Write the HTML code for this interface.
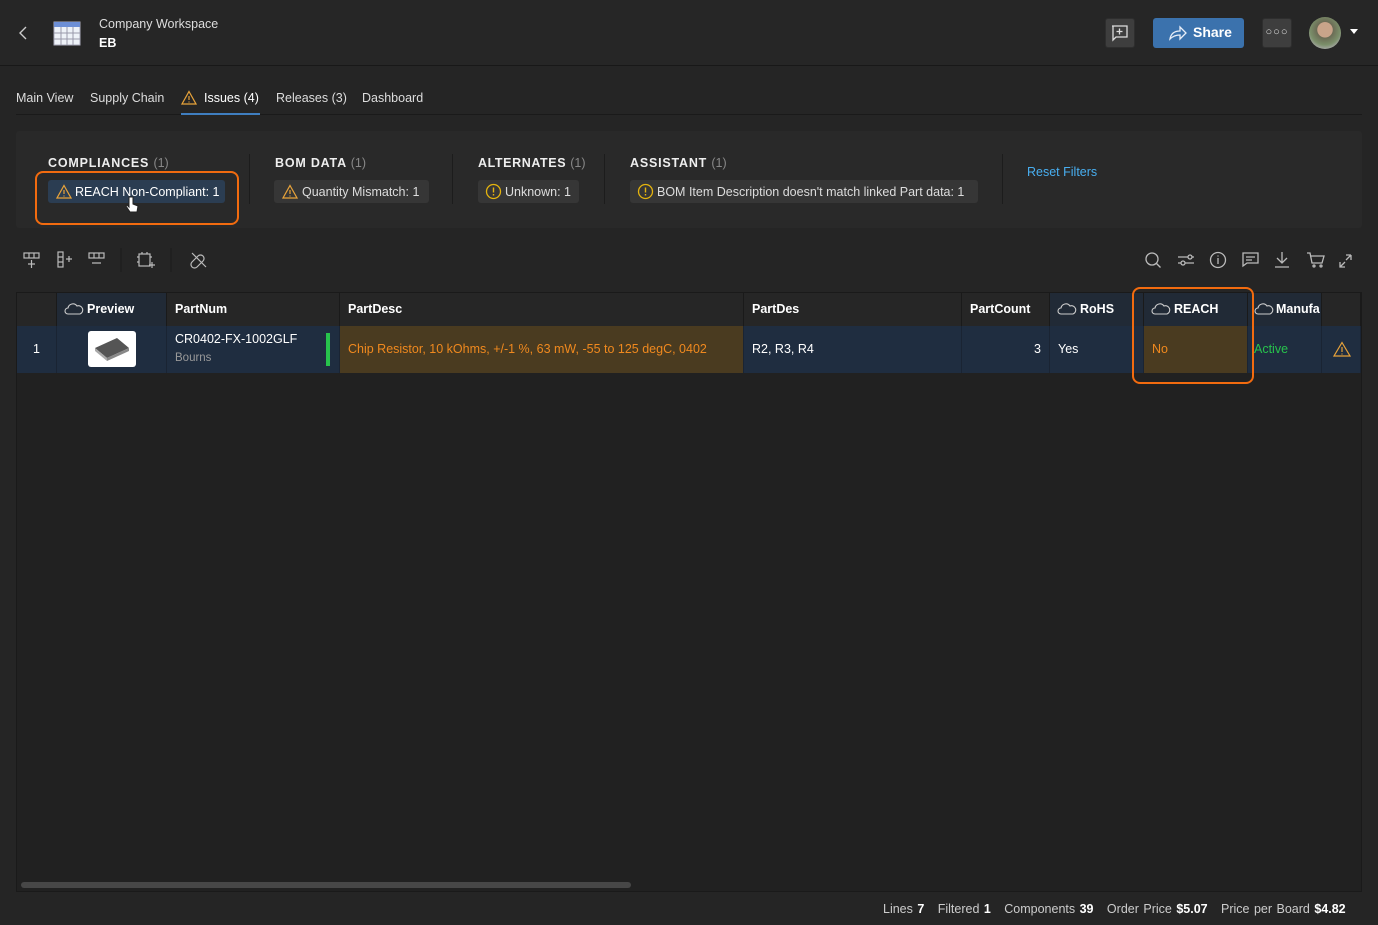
<!DOCTYPE html>
<html><head><style>
*{box-sizing:border-box;margin:0;padding:0}
body{width:1378px;height:925px;background:#252525;font-family:"Liberation Sans",sans-serif;color:#ddd;position:relative;overflow:hidden;font-size:13px}
.a{position:absolute}
.hdr{left:0;top:0;width:1378px;height:66px;border-bottom:1px solid #181818;background:#262626}
.btn{background:#3e3e3e;border:1px solid #2e2e2e;border-radius:3px}
.tab{top:91px;font-size:12.5px;color:#ddd}
.chip{height:23px;border-radius:3px;background:#363636;font-size:12.5px;color:#ddd;line-height:24px;padding:0 8px 0 8px;white-space:nowrap}
.sec{font-size:12.5px;font-weight:bold;letter-spacing:.8px;color:#eee;top:156px}
.sec span{font-weight:normal;color:#888;letter-spacing:0}
.vs{width:1px;background:#1c1c1c;top:154px;height:50px}
.th{top:293px;height:33px;background:#262626;border-right:1px solid #1a1a1a;font-weight:bold;font-size:12.5px;color:#fff;line-height:32px;padding-left:8px}
.td{top:326px;height:47px;background:#1f2d40;border-right:1px solid #1a2433;font-size:12.5px;line-height:47px;padding-left:8px;color:#fff}
</style></head><body>
<div class="a hdr"></div>
<svg class="a" style="left:18px;top:26px" width="12" height="14"><path d="M8 1L2 7l6 6" stroke="#ccc" fill="none" stroke-width="1.4"/></svg>
<svg class="a" style="left:53px;top:21px" width="28" height="25"><rect x="1" y="1" width="26" height="23" fill="#eef2f8" stroke="#aab"/><rect x="1" y="1" width="26" height="5" fill="#6d8fd6"/><path d="M1 12h26M1 18h26M8 6v18M14 6v18M20 6v18" stroke="#99a" stroke-width="1"/></svg>
<div class="a" style="left:99px;top:17px;font-size:12.5px;color:#ddd">Company Workspace</div>
<div class="a" style="left:99px;top:36px;font-size:12.5px;font-weight:bold;color:#fff">EB</div>
<div class="a btn" style="left:1105px;top:18px;width:30px;height:30px"></div>
<svg class="a" style="left:1110px;top:24px" width="20" height="18"><path d="M2 2h15v11H6l-3 3V2z M9.5 4.5v6M6.5 7.5h6" stroke="#ddd" fill="none" stroke-width="1.3"/></svg>
<div class="a" style="left:1153px;top:18px;width:91px;height:30px;background:#3b72ad;border-radius:3px"></div>
<svg class="a" style="left:1168px;top:24px" width="20" height="18"><path d="M2 15c1-6 5-8 10-8V3l6 6-6 6v-4c-4 0-7 1-10 4z" stroke="#e8eef8" fill="none" stroke-width="1.3"/></svg>
<div class="a" style="left:1193px;top:24px;font-size:14px;font-weight:bold;color:#fff">Share</div>
<div class="a btn" style="left:1262px;top:18px;width:30px;height:30px;color:#ddd;text-align:center;line-height:26px;font-size:11px;letter-spacing:1px">○○○</div>
<div class="a" style="left:1309px;top:17px;width:32px;height:32px;border-radius:50%;background:radial-gradient(circle at 50% 40%,#c9a48a 0 30%,#6b6b55 32%,#7b8f6a 60%,#aaa 80%)"></div>
<div class="a" style="left:1350px;top:29px;width:0;height:0;border-left:4px solid transparent;border-right:4px solid transparent;border-top:5px solid #fff"></div>

<div class="a tab" style="left:16px">Main View</div>
<div class="a tab" style="left:90px">Supply Chain</div>
<svg class="a" style="left:181px;top:90px" width="16" height="15"><path d="M8 1.5L15 14H1z" stroke="#e8a33a" fill="none" stroke-width="1.2"/><path d="M8 6v4M8 11.5v1" stroke="#e8a33a" stroke-width="1.2"/></svg>
<div class="a tab" style="left:204px;color:#fff">Issues (4)</div>
<div class="a tab" style="left:276px">Releases (3)</div>
<div class="a tab" style="left:362px">Dashboard</div>
<div class="a" style="left:16px;top:114px;width:1346px;height:1px;background:#1a1a1a"></div>
<div class="a" style="left:181px;top:113px;width:79px;height:2px;background:#3f7ec0"></div>

<div class="a" style="left:16px;top:131px;width:1346px;height:97px;background:#292929;border-radius:3px"></div>
<div class="a sec" style="left:48px">COMPLIANCES <span>(1)</span></div>
<div class="a vs" style="left:249px"></div>
<div class="a sec" style="left:275px">BOM DATA <span>(1)</span></div>
<div class="a vs" style="left:452px"></div>
<div class="a sec" style="left:478px;letter-spacing:.6px">ALTERNATES <span>(1)</span></div>
<div class="a vs" style="left:604px"></div>
<div class="a sec" style="left:630px">ASSISTANT <span>(1)</span></div>
<div class="a vs" style="left:1002px"></div>
<div class="a" style="left:1027px;top:165px;font-size:12.5px;color:#48aef0">Reset Filters</div>

<div class="a chip" style="left:48px;top:180px;width:177px;background:#2b3d52;padding-left:27px;color:#fff">REACH Non-Compliant: 1</div>
<svg class="a" style="left:56px;top:184px" width="16" height="15"><path d="M8 1.5L15 14H1z" stroke="#e8a33a" fill="none" stroke-width="1.2"/><path d="M8 6v4M8 11.5v1" stroke="#e8a33a" stroke-width="1.2"/></svg>
<div class="a" style="left:35px;top:171px;width:204px;height:54px;border:2px solid #f26b0f;border-radius:8px"></div>
<svg class="a" style="left:125px;top:195px" width="14" height="20"><path d="M4 2v10l-2-2-1 1 4 6h7l1-6-5-2V2z" fill="#fff" stroke="#222" stroke-width="1"/></svg>
<div class="a chip" style="left:274px;top:180px;width:155px;padding-left:28px">Quantity Mismatch: 1</div>
<svg class="a" style="left:282px;top:184px" width="16" height="15"><path d="M8 1.5L15 14H1z" stroke="#e8a33a" fill="none" stroke-width="1.2"/><path d="M8 6v4M8 11.5v1" stroke="#e8a33a" stroke-width="1.2"/></svg>
<div class="a chip" style="left:478px;top:180px;width:101px;padding-left:27px">Unknown: 1</div>
<svg class="a" style="left:485px;top:183px" width="17" height="17"><circle cx="8.5" cy="8.5" r="7" stroke="#e5b40e" fill="none" stroke-width="1.3"/><path d="M8.5 4.5v5M8.5 11v1.5" stroke="#e5b40e" stroke-width="1.4"/></svg>
<div class="a chip" style="left:630px;top:180px;width:348px;padding-left:27px">BOM Item Description doesn't match linked Part data: 1</div>
<svg class="a" style="left:637px;top:183px" width="17" height="17"><circle cx="8.5" cy="8.5" r="7" stroke="#e5b40e" fill="none" stroke-width="1.3"/><path d="M8.5 4.5v5M8.5 11v1.5" stroke="#e5b40e" stroke-width="1.4"/></svg>

<svg class="a" style="left:20px;top:248px" width="190" height="24"><g stroke="#bbb" fill="none" stroke-width="1.2"><rect x="4" y="5" width="15" height="5"/><path d="M9 5v5M14 5v5M11.5 12v8M8 16h7"/><rect x="38" y="4" width="5" height="15"/><path d="M38 9h5M38 14h5M46 11h6M49 8v6"/><rect x="69" y="5" width="15" height="5"/><path d="M74 5v5M79 5v5M72 15h9"/><rect x="119" y="6" width="11" height="12"/><path d="M117 9h2M117 14h2M130 9h2M122 4v2M127 4v2M129 17h6M132 14v6"/><path d="M178 8l-6 6a3 3 0 0 0 5 5l6-6a3 3 0 0 0-5-5zM172 5l14 14"/></g><path d="M101 0v24M151 0v24" stroke="#1a1a1a" stroke-width="1"/></svg>
<svg class="a" style="left:1140px;top:248px" width="220" height="24"><g stroke="#bbb" fill="none" stroke-width="1.3"><circle cx="12" cy="11" r="6"/><path d="M16.5 15.5l4 4"/><path d="M38 9h16M38 15h16"/><circle cx="50" cy="9" r="2" fill="#252525"/><circle cx="43" cy="15" r="2" fill="#252525"/><circle cx="78" cy="12" r="7.5"/><path d="M78 10v6M78 7.5v1"/><path d="M103 5h15v10h-11l-4 3z M106 9h9M106 12h6"/><path d="M142 4v11M137 10l5 5 5-5M135 19h14"/><path d="M167 5h3l2 10h10l2-7h-13"/><circle cx="174" cy="18" r="1"/><circle cx="181" cy="18" r="1"/><path d="M200 19l5-5M211 7l-5 5M205 19h-5v-5M211 7v5M211 7h-5" /></g></svg>

<div class="a" style="left:16px;top:292px;width:1346px;height:600px;background:#212121;border:1px solid #1a1a1a"></div>
<div class="a th" style="left:17px;width:40px"></div>
<div class="a th" style="left:57px;width:110px;background:#212a36;padding-left:30px">Preview</div>
<div class="a th" style="left:167px;width:173px">PartNum</div>
<div class="a th" style="left:340px;width:404px">PartDesc</div>
<div class="a th" style="left:744px;width:218px">PartDes</div>
<div class="a th" style="left:962px;width:88px">PartCount</div>
<div class="a th" style="left:1050px;width:94px;background:#212a36;padding-left:30px">RoHS</div>
<div class="a th" style="left:1144px;width:104px;background:#212a36;padding-left:30px">REACH</div>
<div class="a th" style="left:1248px;width:74px;background:#212a36;padding-left:28px;overflow:hidden">Manufa</div>
<div class="a th" style="left:1322px;width:39px"></div>
<svg class="a" style="left:64px;top:302px;" width="20" height="14"><path d="M4 12a3 3 0 0 1 0-6 5 5 0 0 1 9-2 4 4 0 0 1 3 8z" stroke="#ccc" fill="none" stroke-width="1.1"/></svg>
<svg class="a" style="left:1057px;top:302px;" width="20" height="14"><path d="M4 12a3 3 0 0 1 0-6 5 5 0 0 1 9-2 4 4 0 0 1 3 8z" stroke="#ccc" fill="none" stroke-width="1.1"/></svg>
<svg class="a" style="left:1151px;top:302px;" width="20" height="14"><path d="M4 12a3 3 0 0 1 0-6 5 5 0 0 1 9-2 4 4 0 0 1 3 8z" stroke="#ccc" fill="none" stroke-width="1.1"/></svg>
<svg class="a" style="left:1254px;top:302px;" width="20" height="14"><path d="M4 12a3 3 0 0 1 0-6 5 5 0 0 1 9-2 4 4 0 0 1 3 8z" stroke="#ccc" fill="none" stroke-width="1.1"/></svg>

<div class="a td" style="left:17px;width:40px;padding-left:16px">1</div>
<div class="a td" style="left:57px;width:110px"></div>
<div class="a" style="left:88px;top:331px;width:48px;height:36px;background:#fff;border-radius:3px"></div>
<svg class="a" style="left:91px;top:334px" width="42" height="30"><path d="M4 14l22-10 12 10-22 10z" fill="#555"/><path d="M4 14l12 10v3L4 17z" fill="#aaa"/><path d="M16 24l22-10v3L16 27z" fill="#888"/></svg>
<div class="a td" style="left:167px;width:173px;line-height:normal;padding-top:6px">CR0402-FX-1002GLF<div style="color:#999;font-size:11.5px;margin-top:6px">Bourns</div></div>
<div class="a" style="left:326px;top:333px;width:4px;height:33px;background:#27c24c"></div>
<div class="a td" style="left:340px;width:404px;background:#4a3b20;color:#f0891e">Chip Resistor, 10 kOhms, +/-1 %, 63 mW, -55 to 125 degC, 0402</div>
<div class="a td" style="left:744px;width:218px">R2, R3, R4</div>
<div class="a td" style="left:962px;width:88px;text-align:right;padding-right:8px">3</div>
<div class="a td" style="left:1050px;width:94px">Yes</div>
<div class="a td" style="left:1144px;width:104px;background:#4a3b20;color:#f0891e">No</div>
<div class="a td" style="left:1248px;width:74px;padding-left:6px;color:#27c24c">Active</div>
<div class="a td" style="left:1322px;width:39px"></div>
<svg class="a" style="left:1333px;top:341px" width="18" height="16"><path d="M9 1.5L17 15H1z" stroke="#e8a33a" fill="none" stroke-width="1.2"/><path d="M9 6v5M9 12.5v1" stroke="#e8a33a" stroke-width="1.2"/></svg>
<div class="a" style="left:1132px;top:287px;width:122px;height:97px;border:2px solid #f26b0f;border-radius:8px"></div>

<div class="a" style="left:21px;top:882px;width:610px;height:6px;background:#474747;border-radius:3px"></div>
<div class="a" style="left:883px;top:902px;font-size:12.5px;color:#ccc;white-space:nowrap;word-spacing:1px">Lines <b style="color:#fff">7</b>&nbsp;&nbsp; Filtered <b style="color:#fff">1</b>&nbsp;&nbsp; Components <b style="color:#fff">39</b>&nbsp;&nbsp; Order Price <b style="color:#fff">$5.07</b>&nbsp;&nbsp; Price per Board <b style="color:#fff">$4.82</b></div>
</body></html>
